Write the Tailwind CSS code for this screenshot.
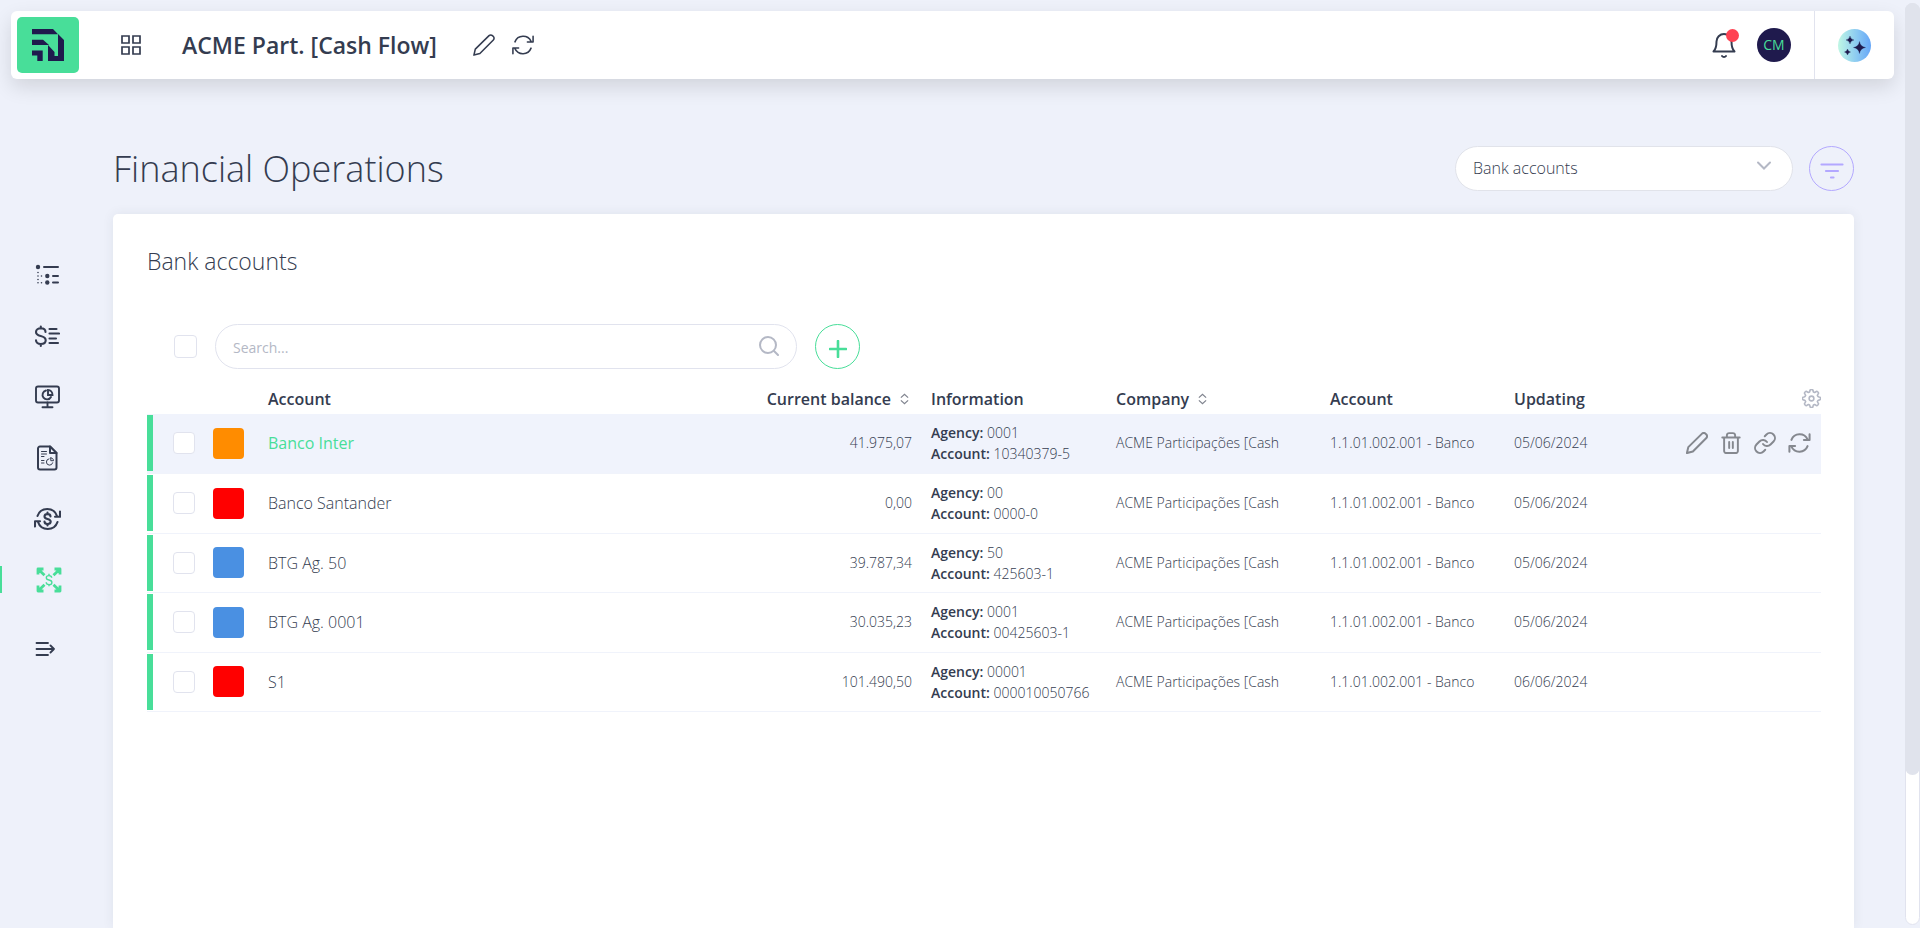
<!DOCTYPE html>
<html lang="en">
  <head>
    <meta charset="UTF-8" />
    <meta name="viewport" content="width=device-width, initial-scale=1.0" />
    <title>Financial Operations</title>
    <script src="https://cdn.jsdelivr.net/npm/@tailwindcss/browser@4"></script>
  </head>
  <body class="bg-[#eef1fa] font-['Open_Sans',sans-serif] text-[#343c50] h-screen overflow-hidden">
    <!-- Shared icons -->
    <svg class="hidden">
      <symbol id="icon-pencil" viewBox="0 0 24 24">
        <path d="M1 23l1.500-6.500L17.500 1.800a2.600 2.600 0 0 1 3.700 0l1 1a2.600 2.600 0 0 1 0 3.700L7.500 21.300z" />
      </symbol>
      <symbol id="icon-refresh" viewBox="0 0 24 24">
        <path d="M3.2 8.6a9.6 9.6 0 0 1 17.6-.6M23 2.5v6.2h-6.2M20.8 15.4a9.6 9.6 0 0 1-17.6.6M1 21.5v-6.2h6.2" />
      </symbol>
      <symbol id="icon-sort" viewBox="0 0 10 12">
        <path d="M1 4.5l4-3.7 4 3.7M1 7.5l4 3.7 4-3.7" />
      </symbol>
    </svg>

    <div class="h-full flex flex-col pt-[11px]">
      <!-- Top bar -->
      <header class="ml-[11px] mr-[26px] h-[68px] shrink-0 flex items-center bg-white rounded-md shadow-[0_8px_20px_rgba(0,0,0,0.12)]">
        <a href="#" aria-label="Home" class="ml-[6px] w-[62px] h-[56px] rounded-[5px] bg-[#48de99] flex items-center justify-center">
          <svg class="w-8 h-8" viewBox="0 0 32 32" fill="#1f1a4d">
            <path d="M0 0h21l5.500 5.500L32 11v21H16V16L11 10.700H0v5.300h16l6.500 7v4h4V5.300H0z" fill="none" />
            <path d="M0 0h21l5 5.300H0z" />
            <path d="M26 5l6 6v21H16V16l6.500 7v4h3.500z" />
            <path d="M0 10.700h11l6 5.300H0z" />
            <path d="M0 21.500h10.700V32H5.300v-5.500H0z" />
          </svg>
        </a>
        <button type="button" aria-label="Modules" class="ml-[42px]">
          <svg class="w-5 h-5" viewBox="0 0 20 20" fill="none" stroke="currentColor" stroke-width="1.7">
            <path d="M1 1h7v7H1zM12 1h7v7h-7zM1 12h7v7H1zM12 12h7v7h-7z" />
          </svg>
        </button>
        <span class="ml-[41px] text-[23px] leading-8 font-semibold">ACME Part. [Cash Flow]</span>
        <button type="button" aria-label="Edit" class="ml-9">
          <svg class="w-[22px] h-[22px]" fill="none" stroke="currentColor" stroke-width="1.7" stroke-linejoin="round"><use href="#icon-pencil" /></svg>
        </button>
        <button type="button" aria-label="Refresh" class="ml-[17px]">
          <svg class="w-[22px] h-[22px]" fill="none" stroke="currentColor" stroke-width="1.7" stroke-linecap="round" stroke-linejoin="round"><use href="#icon-refresh" /></svg>
        </button>

        <button type="button" aria-label="Notifications" class="relative ml-auto">
          <svg class="w-6 h-[26px]" viewBox="0 0 24 26" fill="none" stroke="currentColor" stroke-width="2" stroke-linecap="round" stroke-linejoin="round">
            <path d="M1.500 19.500C4 17 4.500 14 4.500 9.500a7.500 7.500 0 0 1 15 0c0 4.500.5 7.500 3 10zM10 24a2.500 2.500 0 0 0 4 0" />
          </svg>
          <span class="absolute -top-[3px] -right-[3px] w-[13px] h-[13px] rounded-full bg-[#ff4252]"></span>
        </button>
        <button type="button" class="ml-[21px] w-[34px] h-[34px] rounded-full bg-[#1f1a4d] text-[#48de99] text-sm">CM</button>
        <div class="ml-[23px] h-full flex items-center border-l border-[#e1e3ee] pl-[23px] pr-[23px]">
          <button type="button" aria-label="Assistant" class="w-[33px] h-[33px] rounded-full bg-linear-to-r from-[#c0f7e4] to-[#66a6f7]">
            <svg class="w-[33px] h-[33px]" viewBox="0 0 33 33" fill="#1f1a4d">
              <path d="M21.500 12.500q.8 5.200 6 6-5.200.8-6 6-.8-5.200-6-6 5.200-.8 6-6zM12 7q.6 3.400 4 4-3.400.6-4 4-.6-3.400-4-4 3.400-.6 4-4zM9.500 20q.5 2.500 3 3-2.500.5-3 3-.5-2.500-3-3 2.500-.5 3-3z" stroke="#1f1a4d" stroke-width=".3" />
            </svg>
          </button>
        </div>
      </header>

      <div class="flex-1 min-h-0 flex">
        <!-- Side menu -->
        <nav class="w-[113px] shrink-0 flex flex-col gap-[21px] pt-44">
          <a href="#" aria-label="Plan" class="h-10 pl-[34px] flex items-center">
            <svg class="w-[26px] h-[26px]" viewBox="0 0 26 26" fill="none" stroke="currentColor" stroke-width="2" stroke-linecap="round">
              <path d="M10 5h14M19 14h5M19 20.500h5" />
              <path d="M4 10.500v0M4 14v0M4 17.500v0M4 20.800v0M7.500 14v0M7.500 20.800v0" stroke-width="1.600" />
              <g fill="currentColor" stroke="none"><circle cx="4" cy="5" r="2.200" /><circle cx="13.300" cy="14" r="2.200" /><circle cx="13.300" cy="20.500" r="2.200" /></g>
            </svg>
          </a>
          <a href="#" aria-label="Entries" class="h-10 pl-[34px] flex items-center">
            <svg class="w-[26px] h-[26px]" viewBox="0 0 26 26" fill="none" stroke="currentColor" stroke-width="2.100" stroke-linecap="round">
              <path d="M11.500 9c0-2.500-2-3.700-4.700-3.700S2 6.700 2 9s2 3.300 4.700 4 5 1.800 5 4.200-2.200 3.800-5 3.800S2 19.500 2 17.200M6.800 3.500v2M6.800 21v2M15.500 6h7M15.500 10.500h9.500M15.500 15.500h6.500M15.500 20h8.500" />
            </svg>
          </a>
          <a href="#" aria-label="Dashboards" class="h-10 pl-[34px] flex items-center">
            <svg class="w-[26px] h-[26px]" viewBox="0 0 26 26" fill="none" stroke="currentColor" stroke-width="1.900" stroke-linecap="round">
              <rect x="2" y="2.500" width="23" height="16" rx="2" /><path d="M13.500 18.500v4.500M8.500 23.300h10M12 6.500a4.500 4.500 0 1 0 5 6.500M14 6v5h4.500c0-3-2-5-4.500-5z" />
            </svg>
          </a>
          <a href="#" aria-label="Reports" class="h-10 pl-[34px] flex items-center">
            <svg class="w-[26px] h-[26px]" viewBox="0 0 26 26" fill="none" stroke="currentColor" stroke-width="2" stroke-linecap="round" stroke-linejoin="round">
              <path d="M16 1.500H6a2 2 0 0 0-2 2v19a2 2 0 0 0 2 2h14.500a2 2 0 0 0 2-2V8z" />
              <path d="M16 1.500V8h6.500z" fill="#eef1fa" />
              <path d="M7.500 6.500h5M7.500 9h5M7.500 11.500h2.500M7.500 15.500h2.500M7.500 18h2.500M15 13.800a3.200 3.200 0 1 0 3.700 4M16.800 13v2.700h2.700c0-1.700-1-2.700-2.700-2.700z" stroke-width="1" />
            </svg>
          </a>
          <a href="#" aria-label="Reconciliation" class="h-10 pl-[34px] flex items-center">
            <svg class="w-[27px] h-[26px]" viewBox="0 0 27 26" fill="none" stroke="currentColor" stroke-width="2.100" stroke-linecap="round" stroke-linejoin="round">
              <path d="M3.500 10a10.300 10.300 0 0 1 19.500 0M26 5.500v5.300h-5M23.500 16a10.300 10.300 0 0 1-19.500 0M1 20.500v-5.300h5" />
              <path d="M16.500 10.500c0-1.600-1.300-2.400-3-2.400s-3 .8-3 2.400 1.300 2.100 3 2.500 3.200 1 3.200 2.600-1.500 2.500-3.200 2.500-3-.9-3-2.500M13.500 6.500v1.500M13.500 18v1.500" />
            </svg>
          </a>
          <a href="#" aria-label="Financial operations" class="relative h-10 mb-2 pl-[36px] flex items-center text-[#48de99]">
            <span class="absolute left-0 top-[6px] w-[2px] h-[27px] bg-[#48de99]"></span>
            <svg class="w-[26px] h-[26px]" viewBox="0 0 26 26" fill="none" stroke="currentColor" stroke-width="2.800" stroke-linejoin="round">
              <path d="M2 7.500V2h5.500M2.500 2.500L8.500 8.200M18.500 2H24v5.500M23.500 2.500L17.500 8.200M2 18.500V24h5.500M2.500 23.500L8.500 17.800M18.500 24H24v-5.500M23.500 23.500L17.500 17.800" />
              <path d="M15.700 10.800c0-1.500-1.100-2.200-2.700-2.200s-2.700.7-2.700 2.100 1.200 2 2.700 2.300 2.900.9 2.900 2.400-1.300 2.200-2.900 2.200-2.800-.8-2.800-2.300M13 6.800v1.700M13 17.500v1.700" stroke-width="1.400" />
            </svg>
          </a>
          <button type="button" aria-label="Expand menu" class="h-10 pl-[35px] flex items-center">
            <svg class="w-5 h-4" viewBox="0 0 20 16" fill="none" stroke="currentColor" stroke-width="1.800" stroke-linecap="round" stroke-linejoin="round">
              <path d="M1.500 2H13M1.500 8h17.500M1.500 14H13M15.500 4.500L19 8l-3.500 3.500" />
            </svg>
          </button>
        </nav>

        <main class="flex-1 min-w-0 flex flex-col mr-[66px] pt-[67px]">
          <div class="flex items-center">
            <h1 class="text-4xl font-light leading-[45px]">Financial Operations</h1>
            <div class="relative ml-auto w-[338px]">
              <select aria-label="Operation" class="appearance-none w-full h-[45px] rounded-full border border-[#e1e3ea] bg-white pl-[17px] pr-12 pb-[2px] text-base font-light">
                <option>Bank accounts</option>
              </select>
              <svg class="absolute right-[21px] top-[15px] w-4 h-[10px] pointer-events-none" viewBox="0 0 16 10" fill="none" stroke="#b4b8c5" stroke-width="2" stroke-linecap="round"><path d="M2 1.500l6 6 6-6" /></svg>
            </div>
            <button type="button" aria-label="Filter" class="ml-4 w-[45px] h-[45px] rounded-full border border-[#b3a8ff] flex items-center justify-center">
              <svg class="w-6 h-6" viewBox="0 0 24 24" fill="none" stroke="#b3a8ff" stroke-width="2.200" stroke-linecap="round"><path d="M1.500 7.500h21M6 14h12M11 20.500h2.500" /></svg>
            </button>
          </div>

          <section class="flex-1 min-h-0 mt-[23px] bg-white rounded-t-[5px] pl-[34px] pr-[33px] pt-[31px] shadow-[0_0_12px_rgba(52,60,80,0.08)]">
            <h2 class="text-[23px] font-light leading-8">Bank accounts</h2>

            <div class="mt-[47px] ml-[27px] flex items-center">
              <input type="checkbox" aria-label="Select all" class="appearance-none w-[23px] h-[23px] rounded-[4px] border border-[#e1e3ee] bg-white" />
              <div class="relative ml-[18px] w-[582px]">
                <input type="search" aria-label="Search" placeholder="Search..." class="w-full h-[45px] rounded-full border border-[#e1e3ee] pl-[17px] pr-12 pt-[2px] text-sm placeholder:text-[#b4b8c5]" />
                <svg class="absolute right-[18px] top-3 w-5 h-5" viewBox="0 0 20 20" fill="none" stroke="#b4b8c5" stroke-width="2" stroke-linecap="round"><circle cx="9" cy="9" r="8" /><path d="M15 15l4 4" /></svg>
              </div>
              <button type="button" aria-label="Add account" class="ml-[18px] w-[45px] h-[45px] rounded-full border border-[#48de99] flex items-center justify-center pt-1">
                <svg class="w-[18px] h-[18px]" viewBox="0 0 18 18" fill="none" stroke="#48de99" stroke-width="2.600" stroke-linecap="round"><path d="M9 1v16M1 9h16" /></svg>
              </button>
            </div>

            <table class="mt-[14px] w-full table-fixed text-left text-sm font-light">
              <colgroup>
                <col class="w-[66px]" />
                <col class="w-[55px]" />
                <col />
                <col class="w-[180px]" />
                <col class="w-[185px]" />
                <col class="w-[214px]" />
                <col class="w-[184px]" />
                <col class="w-[124px]" />
                <col class="w-[183px]" />
              </colgroup>
              <thead>
                <tr class="h-[31px] text-base leading-6 [&>th]:font-semibold">
                  <th></th>
                  <th></th>
                  <th>Account</th>
                  <th>
                    <button type="button" class="ml-auto mr-[22px] flex items-center gap-[9px] whitespace-nowrap">Current balance
                      <svg class="w-[9px] h-3" fill="none" stroke="#80848f" stroke-width="1.400"><use href="#icon-sort" /></svg>
                    </button>
                  </th>
                  <th>Information</th>
                  <th>
                    <button type="button" class="flex items-center gap-[9px]">Company
                      <svg class="w-[9px] h-3" fill="none" stroke="#80848f" stroke-width="1.400"><use href="#icon-sort" /></svg>
                    </button>
                  </th>
                  <th>Account</th>
                  <th>Updating</th>
                  <th>
                    <button type="button" aria-label="Table settings" class="block ml-auto">
                      <svg class="w-[19px] h-[19px]" viewBox="0 0 24 24" fill="none" stroke="#b4b8c5" stroke-width="2" stroke-linejoin="round">
                        <circle cx="12" cy="12" r="3" />
                        <path d="M10 2.500a2 2 0 0 1 4 0l.4 1.300 1.500.7 1.300-.7a2 2 0 0 1 2.900 2.900l-.7 1.300.7 1.500 1.400.5a2 2 0 0 1 0 4l-1.400.5-.7 1.500.7 1.300a2 2 0 0 1-2.900 2.900l-1.300-.7-1.500.7-.4 1.300a2 2 0 0 1-4 0l-.4-1.300-1.500-.7-1.300.7a2 2 0 0 1-2.900-2.900l.7-1.300-.7-1.500-1.400-.5a2 2 0 0 1 0-4l1.400-.5.7-1.500-.7-1.300a2 2 0 0 1 2.900-2.900l1.300.7 1.500-.7z" />
                      </svg>
                    </button>
                  </th>
                </tr>
              </thead>
              <tbody id="accounts"></tbody>
            </table>
          </section>
        </main>
      </div>
    </div>

    <!-- Scrollbar -->
    <div class="fixed right-0 top-[3px] bottom-[3px] w-[15px] rounded-full bg-white border border-[#e1e3ee]">
      <div class="absolute -inset-x-px -top-px h-[772px] rounded-full bg-[#e0e3ec]"></div>
    </div>

    <template id="row-actions">
      <div class="flex justify-end gap-3 pr-[10px] text-[#85888f]">
        <button type="button" aria-label="Edit">
          <svg class="w-[22px] h-[22px]" fill="none" stroke="currentColor" stroke-width="2.200" stroke-linejoin="round"><use href="#icon-pencil" /></svg>
        </button>
        <button type="button" aria-label="Delete">
          <svg class="w-[22px] h-[22px]" viewBox="0 0 24 24" fill="none" stroke="currentColor" stroke-width="2.100" stroke-linecap="round" stroke-linejoin="round"><path d="M2.500 6h19M4.500 6v14.500A2.300 2.300 0 0 0 6.800 23h10.400a2.300 2.300 0 0 0 2.300-2.500V6M7.500 5.500V3.500A2.500 2.500 0 0 1 10 1.200h4a2.500 2.500 0 0 1 2.500 2.300v2M10 11v6.500M14 11v6.500" /></svg>
        </button>
        <button type="button" aria-label="Link">
          <svg class="w-[22px] h-[22px]" viewBox="1 1 22 22" fill="none" stroke="currentColor" stroke-width="2" stroke-linecap="round" stroke-linejoin="round"><path d="M10 13a5 5 0 0 0 7.540.540l3-3a5 5 0 0 0-7.070-7.070l-1.720 1.710M14 11a5 5 0 0 0-7.540-.540l-3 3a5 5 0 0 0 7.070 7.070l1.710-1.710" /></svg>
        </button>
        <button type="button" aria-label="Refresh">
          <svg class="w-[23px] h-[22px]" fill="none" stroke="currentColor" stroke-width="2.200" stroke-linecap="round" stroke-linejoin="round"><use href="#icon-refresh" /></svg>
        </button>
      </div>
    </template>

    <script>
      const accounts = [
        { name: "Banco Inter", color: "#ff8c00", balance: "41.975,07", agency: "0001", number: "10340379-5", date: "05/06/2024", active: true },
        { name: "Banco Santander", color: "#ff0000", balance: "0,00", agency: "00", number: "0000-0", date: "05/06/2024" },
        { name: "BTG Ag. 50", color: "#4a90e2", balance: "39.787,34", agency: "50", number: "425603-1", date: "05/06/2024" },
        { name: "BTG Ag. 0001", color: "#4a90e2", balance: "30.035,23", agency: "0001", number: "00425603-1", date: "05/06/2024" },
        { name: "S1", color: "#ff0000", balance: "101.490,50", agency: "00001", number: "000010050766", date: "06/06/2024" },
      ];

      const actions = document.getElementById("row-actions").innerHTML;

      document.getElementById("accounts").innerHTML = accounts
        .map(
          (a) => `
        <tr class="h-[59px] even:h-[60px] border-b border-[#f0f3fb] ${a.active ? "bg-[#f0f3fc]" : ""}">
          <td>
            <div class="flex items-center">
              <span class="w-[6px] h-14 bg-[#48de99]"></span>
              <input type="checkbox" aria-label="Select ${a.name}" class="appearance-none ml-5 w-[22px] h-[22px] rounded-[4px] border border-[#e1e3ee] bg-white" />
            </div>
          </td>
          <td><span class="block w-[31px] h-[31px] rounded-[4px]" style="background-color: ${a.color}"></span></td>
          <td class="text-base"><a href="#" class="${a.active ? "text-[#48de99] font-normal" : ""}">${a.name}</a></td>
          <td class="text-right pr-[19px]">${a.balance}</td>
          <td class="leading-[21px] whitespace-nowrap">
            <div><b class="font-semibold">Agency:</b> ${a.agency}</div>
            <div><b class="font-semibold">Account:</b> ${a.number}</div>
          </td>
          <td>ACME Participações [Cash</td>
          <td>1.1.01.002.001 - Banco</td>
          <td>${a.date}</td>
          <td>${a.active ? actions : ""}</td>
        </tr>`
        )
        .join("");
    </script>
  </body>
</html>
